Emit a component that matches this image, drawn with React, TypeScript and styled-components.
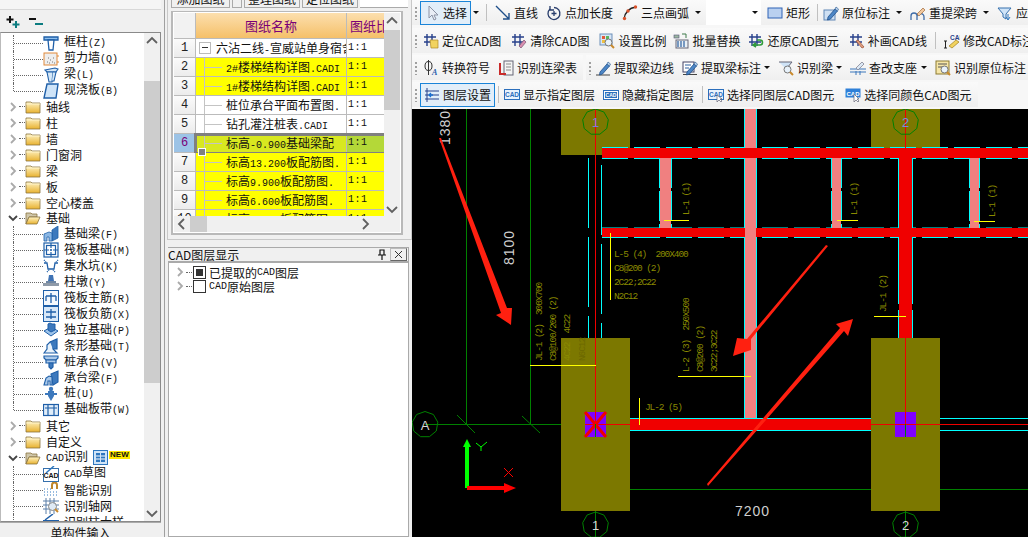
import React from "react";
import styled, { createGlobalStyle } from "styled-components";

const Global = createGlobalStyle`
  html, body { margin: 0; padding: 0; background: #f0f0f0; overflow: hidden; }
  * { box-sizing: border-box; }
  #root { width: 1028px; height: 537px; }
`;

const CJK = `"Noto Sans CJK SC", "Liberation Sans", sans-serif`;

const Page = styled.div`
  width: 1028px; height: 537px; display: flex; overflow: hidden;
  background: #f0f0f0; font-family: ${CJK}; font-size: 12px; color: #111;
`;
/* ---------- left ---------- */
const LeftPanel = styled.div`
  width: 165px; flex: none; display: flex; flex-direction: column;
  border-right: 1px solid #a0a0a0; padding-right: 3px;
`;
const LeftStub = styled.div`height: 10px; border-bottom: 1px solid #d8d8d8; background: #f5f5f5;`;
const ExpandBar = styled.div`height: 22px; display: flex; align-items: center; gap: 7px; padding: 2px 0 0 5px;`;
const Tree = styled.div`
  flex: 1; min-height: 0; display: flex; background: #fff; border: 1px solid #8a8a8a; border-left-color: #bbb;
`;
const TreeList = styled.div`flex: 1; min-width: 0; overflow: hidden; padding-top: 2px;`;
const TreeRow = styled.div`height: 15.96px; display: flex; align-items: center; white-space: nowrap; line-height: 16px;`;
const Chevron = styled.svg<{ $flush?: boolean }>`width: 12px; height: 12px; flex: none; margin-left: ${p => (p.$flush ? 0 : 6)}px;`;
const Dots = styled.span`width: 6px; border-bottom: 1px dotted #666; flex: none; margin-right: 0;`;
const GuideSlot = styled.span<{ $last?: boolean }>`
  width: 30px; margin-left: 12px; flex: none; align-self: flex-start;
  height: ${p => (p.$last ? "8px" : "16px")};
  border-left: 1px dotted #666; position: relative;
  &::after { content: ""; display: block; height: 8px; border-bottom: 1px dotted #666; }
`;
const TreeLabel = styled.span`margin-left: 5px; font-size: 12px; color: #111;`;
const Latin = styled.span`font-family: "Liberation Mono", monospace; font-size: 10px;`;
const BottomTab = styled.div`
  height: 15px; overflow: hidden; text-align: center; background: #f0f0f0; border-top: 1px solid #aaa;
  font-size: 12px; line-height: 16px; padding-top: 2px; color: #111;
`;
const Track = styled.div`width: 16px; flex: none; display: flex; flex-direction: column; background: #f0f0f0;`;
const HTrack = styled.div`height: 16px; flex: none; display: flex; background: #f0f0f0;`;
const ArrowCap = styled.div`
  flex: none; display: flex; align-items: center; justify-content: center;
  width: 16px; height: 16px;
`;
const Spacer = styled.div<{ $size: number }>`flex: none; flex-basis: ${p => p.$size}px;`;
const Thumb = styled.div<{ $size: number }>`flex: none; flex-basis: ${p => p.$size}px; background: #cdcdcd;`;

/* ---------- middle ---------- */
const MidPanel = styled.div`width: 247px; flex: none; display: flex; flex-direction: column; padding-left: 2px;`;
const MidTop = styled.div`
  height: 240px; border: 1px solid #c8c8c8; border-top: none; padding-right: 3px; padding-left: 3px;
  display: flex; flex-direction: column;
`;
const MidButtons = styled.div`height: 8px; display: flex; overflow: hidden; gap: 2px; flex: none;`;
const MidButton = styled.div<{ $w: number }>`
  width: ${p => p.$w}px; height: 8px; border: 1px solid #aaa; border-top: none; overflow: hidden;
  text-align: center; font-size: 12px; line-height: 10px; background: #f0f0f0; margin-top: 0;
  & > span { display: block; margin-top: -6px; }
`;
const MidBlank = styled.div`flex: 1; background: #fff; border-bottom: 1px solid #aaa;`;
const SheetBox = styled.div`
  margin-top: 3px; height: 224px; border: 2px solid #b9b9b9; border-top-width: 1px; background: #fff;
  padding: 1px; display: flex; flex-direction: column; width: 232px;
`;
const SheetBody = styled.div`flex: 1; min-height: 0; display: flex;`;
const SheetRows = styled.div`flex: 1; min-width: 0; overflow: hidden;`;
const SheetRowEl = styled.div<{ $sel?: boolean }>`
  display: grid; grid-template-columns: 22px 151px 38px; height: 19px; position: relative;
  ${p => p.$sel && `
    &::after { content: ""; position: absolute; left: 20px; right: -2px; top: -1px; bottom: -2px; border: 3px solid #808080; border-right: none; }
    &::before { content: ""; position: absolute; left: 24px; top: 14px; width: 6px; height: 6px; background: #808080; border: 1px solid #fff; z-index: 2; }
  `}
`;
const HeadRow = styled.div`
  display: grid; grid-template-columns: 22px 151px 38px; height: 26px; overflow: hidden;
`;
const HeadCorner = styled.div`background: #f2f2f2; border-right: 1px solid #bbb; border-bottom: 1px solid #bbb;`;
const HeadCell = styled.div`
  background: linear-gradient(#fcdfae, #f5c069); color: #7a0078; font-size: 13px; line-height: 25px;
  text-align: center; white-space: nowrap; overflow: hidden; border-right: 1px solid #bbb;
  border-bottom: 1px solid #bbb;
`;
const HeadCellClip = styled(HeadCell)`text-align: left; padding-left: 3px; border-right: none;`;
const RowNo = styled.div<{ $sel?: boolean }>`
  background: ${p => (p.$sel ? "#9cc3e6" : "linear-gradient(#fbfbfb,#ececec)")};
  color: ${p => (p.$sel ? "#7a0078" : "#222")}; text-align: center; font-family: "Liberation Mono", monospace;
  font-size: 12px; line-height: 18px; border-right: 1px solid #bbb; border-bottom: 1px solid #bbb;
`;
const NameCell = styled.div<{ $bg: string; $top?: boolean }>`
  background: ${p => p.$bg}; position: relative; white-space: nowrap; overflow: hidden; line-height: 18px;
  padding-left: ${p => (p.$top ? "20px" : "30px")}; border-right: 1px solid #bbb; border-bottom: 1px solid #bbb;
  font-size: 12px;
  ${p => !p.$top && `
    &::before { content: ""; position: absolute; left: 8px; top: 0; bottom: -1px; width: 1px; background: #c4c4c4; }
    &::after { content: ""; position: absolute; left: 9px; top: 9px; width: 17px; height: 1px; background: #c4c4c4; }
  `}
`;
const ExpandBox = styled.span`
  position: absolute; left: 3px; top: 3px; width: 12px; height: 12px; border: 1px solid #bbb; background: #fff;
  &::after { content: ""; position: absolute; left: 2px; right: 2px; top: 4px; height: 1px; background: #333; }
`;
const RatioCell = styled.div<{ $bg: string }>`
  background: ${p => p.$bg}; font-family: "Liberation Mono", monospace; font-size: 10px; letter-spacing: .5px; line-height: 18px;
  padding-left: 1px; border-bottom: 1px solid #bbb; white-space: nowrap;
`;
const LayerPanel = styled.div`margin-top: 7px; flex: 1; min-height: 0; display: flex; flex-direction: column; padding-left: 1px;`;
const LayerTitle = styled.div`
  height: 15px; display: flex; align-items: center; border: 1px solid #aaa; border-left: none;
  font-size: 12px; white-space: nowrap; background: #f0f0f0; width: 241px;
`;
const LayerName = styled.span`flex: 1; overflow: hidden;`;
const LayerBody = styled.div`flex: 1; background: #fff; border: 1px solid #aaa; padding: 2px 0 0 5px; width: 241px;`;
const LayerRow = styled.div`height: 14px; display: flex; align-items: center; font-size: 12px; white-space: nowrap;`;
const LayerCheck = styled.span<{ $on?: boolean }>`
  width: 13px; height: 13px; border: 1px solid #333; margin: 0 3px 0 1px; flex: none; background: #fff; position: relative;
  ${p => p.$on && `&::after { content: ""; position: absolute; left: 2px; top: 2px; width: 7px; height: 7px; background: #333; }`}
`;
const CloseBox = styled.span`
  width: 17px; height: 13px; border: 1px solid #bbb; border-right-color: #666; border-bottom-color: #666; display: flex; align-items: center; justify-content: center; margin: 0 1px 0 3px;
`;

/* ---------- right ---------- */
const RightPanel = styled.div`flex: 1; min-width: 0; display: flex; flex-direction: column;`;
const Toolbars = styled.div`height: 109px; flex: none; background: #f7f7f7; overflow: hidden;`;
const ToolRow = styled.div<{ $h: number }>`display: flex; gap: 3px; height: ${p => p.$h}px; white-space: nowrap;`;
const Bar = styled.div<{ $w: number }>`
  height: 25px; display: flex; align-items: center; gap: 8px; padding-left: 3px; flex: none;
  background: linear-gradient(#fafafa, #efefef); width: ${p => p.$w}px;
`;
const Grip = styled.span`width: 2px; height: 14px; flex: none; background-image: radial-gradient(circle, #a0a0a0 1px, transparent 1px); background-size: 2px 4px; margin-right: -4px;`;
const Tool = styled.span<{ $ml?: number; $sel?: boolean }>`
  display: inline-flex; align-items: center; gap: 3px; font-size: 12px; color: #111; flex: none;
  margin-left: ${p => p.$ml ?? 0}px;
  ${p => p.$sel && `border: 1px solid #1a84d8; background: #e2eef9; height: 24px; padding: 0 3px;`}
`;
const Sep = styled.span<{ $ml?: number }>`width: 1px; height: 17px; background: #c0c0c0; flex: none; margin-left: ${p => p.$ml ?? 0}px;`;
const Drop = styled.span<{ $ml?: number }>`
  width: 0; height: 0; border-left: 3px solid transparent; border-right: 3px solid transparent; border-top: 3px solid #111; flex: none;
  margin-left: ${p => p.$ml ?? -2}px;
`;
const WhiteGap = styled.span`
  width: 55px; height: 25px; background: #fff; display: flex; align-items: center; justify-content: flex-end; padding-right: 3px; flex: none; margin-left: -3px;
`;
const Canvas = styled.div`flex: 1; min-height: 0; background: #000; overflow: hidden;`;
const Drawing = styled.svg`display: block; width: 616px; height: 428px;`;

/* ---------- icons ---------- */
const Svg = styled.svg`width: 16px; height: 16px; flex: none; display: block;`;
const B = "#1f5fa8", LB = "#8fc0ee";
const hash = (c = "#27408b") => (
  <g stroke={c} strokeWidth="1.4" fill="none">
    <path d="M4 1v12M9 1v12M1 4h12M1 9h12" />
  </g>
);
const pen = (
  <g>
    <path d="M5 12 12 4l2.5 2-7 8-3 1z" fill="#4c86c6" stroke="#1f4f8a" strokeWidth=".8" />
    <path d="M12 4l1-2 2.5 2-1 2z" fill="#bcd6f0" stroke="#1f4f8a" strokeWidth=".6" />
  </g>
);
const glass = (
  <g>
    <circle cx="9.5" cy="9.5" r="3.5" fill="#e8f2fb" stroke="#777" />
    <path d="M12 12l3 3" stroke="#c98a2c" strokeWidth="2" />
  </g>
);
const cadBox = (fill: string, c: string) => (
  <g>
    <rect x=".5" y="2.5" width="15" height="10" fill={fill} stroke={c} />
    <text x="8" y="10" textAnchor="middle" fontSize="6.5" fontFamily="Liberation Sans" fontWeight="700" fill={c}>CAD</text>
  </g>
);
const ICONS: Record<string, React.ReactNode> = {
  select: <path d="M5 1v12l3-3 2 5 2-1-2-4h4z" fill="#e9eef6" stroke="#8b93a5" />,
  line: <g stroke="#1f4f8a" fill="none" strokeWidth="1.4"><path d="M1 1l13 13M14 8v6H8" /></g>,
  pointlen: <g fill="none" stroke="#273c6b" strokeWidth="1.3"><path d="M4 4a6 6 0 1 0 4-1.5" /><path d="M4 1v4h4" /><path d="M8 6v5M5.500 8.500h5" /></g>,
  arc: <g><path d="M2 14C3 7 7 3 14 2" fill="none" stroke="#222" strokeWidth="1.3" /><circle cx="2.500" cy="13.500" r="1.700" fill="#d9522c" /><circle cx="6" cy="6" r="1.700" fill="#d9522c" /><circle cx="13.500" cy="2" r="1.700" fill="#d9522c" /></g>,
  rect: <rect x="1" y="3" width="14" height="10" fill="#b9d0f0" stroke="#2f62b5" />,
  mark: <g><rect x="1" y="5" width="11" height="10" fill="#cfe0f3" stroke="#5f86b5" />{pen}</g>,
  respan: <g><path d="M1 15v-4a3 3 0 0 1 6 0v4M7 15v-3a3 3 0 0 1 7 0v3" fill="none" stroke="#3e6ca8" strokeWidth="1.300" /><path d="M7 9l6-6 2 2-6 6z" fill="#f0c8a0" stroke="#a06a3a" strokeWidth=".7" /></g>,
  apply: <g><path d="M1 3h13l-5 6v5l-3-2V9z" fill="#cfe4f8" stroke="#3670ad" /><path d="M11 9v5M9 12l2 3 2-3" stroke="#2e77bf" fill="none" /></g>,
  locate: <g>{hash()}<path d="M7 7h8v8H8z" fill="#f2d35f" stroke="#b08a25" strokeWidth=".7" /></g>,
  clear: <g>{hash()}<path d="M8 13l5-6 2 2-5 6z" fill="#d98fb0" stroke="#7a5070" strokeWidth=".7" /></g>,
  scale: <g><rect x="1" y="1" width="12" height="11" fill="#d7e6f6" stroke="#6d8fb8" /><rect x="3" y="3" width="3" height="3" fill="#e25a3a" /><rect x="7" y="3" width="3" height="3" fill="#5cb85c" /><rect x="3" y="7" width="3" height="3" fill="#f0c040" />{glass}</g>,
  batch: <g><rect x="1" y="2" width="5" height="3" fill="#9ab7a0" stroke="#557" strokeWidth=".6" /><rect x="3" y="7" width="12" height="8" fill="#e9f0f6" stroke="#667" /><path d="M5 8v6M8 8v6M11 8v6" stroke="#2c5f9e" strokeWidth="1.200" /><path d="M9 1h4v4" fill="none" stroke="#3f7a4a" /></g>,
  restore: <g>{hash()}<path d="M6 12h6a2 2 0 0 0 0-5H9M8 10l-3 2 3 2" fill="none" stroke="#2e9a3a" strokeWidth="1.600" /></g>,
  patch: <g>{hash()}<path d="M7 8l2-1 6 7-2 1z" fill="#e0a080" stroke="#9a4a30" strokeWidth=".7" /></g>,
  modify: <g><text x="6" y="7" fontSize="6.500" fontWeight="700" fontFamily="Liberation Sans" fill="#27408b">CAD</text><path d="M0 8h3M1.500 8v7M0 15h3" stroke="#222" /><path d="M5 13l7-6 3 2-7 6z" fill="#f2d35f" stroke="#a08020" strokeWidth=".7" /></g>,
  phi: <g fill="none" stroke="#333" strokeWidth="1"><ellipse cx="5.500" cy="6" rx="3.500" ry="4.500" /><path d="M5.500 0v15" /><text x="9" y="15" fontSize="8" fontStyle="italic" fontWeight="700" stroke="none" fontFamily="Liberation Serif" fill="#2a5caa">A</text></g>,
  linktable: <g><rect x="6" y="1" width="9" height="14" fill="#f4f4f4" stroke="#667" /><path d="M8 4h5M8 7h5M8 10h5" stroke="#8a8a8a" /><path d="M2 3v11h6M2 14" fill="none" stroke="#c92a2a" strokeWidth="2" /></g>,
  extract: <g><path d="M1 15h14" stroke="#444" />{pen}</g>,
  extractmark: <g><rect x="1" y="2" width="11" height="10" fill="#fff" stroke="#446" /><path d="M3 5h6M3 8h4" stroke="#2c5f9e" /><path d="M1 14.500h14" stroke="#444" />{pen}</g>,
  idbeam: <g><path d="M1 2h13l-5 6v2" fill="#cfe4f8" stroke="#667" />{glass}</g>,
  support: <g><path d="M0 9h16M0 12h16" stroke="#3b77bb" /><path d="M6 15v-4M10 15v-4" stroke="#3b77bb" /><path d="M6 8l6-6 2 2-6 6z" fill="#dce8f4" stroke="#778" strokeWidth=".7" /></g>,
  idorigin: <g><rect x="1" y="1" width="13" height="13" fill="#f6e6a8" stroke="#8c7a30" /><path d="M3 4h9M3 7h5" stroke="#555" />{glass}</g>,
  layers: <g stroke="#27408b" fill="none"><path d="M3 1v14M1 4h14M1 8h14M1 12h14" /><path d="M9 8l-4 0M7 6 5 8l2 2" stroke="#1a6fd0" strokeWidth="1.300" /></g>,
  show: cadBox("#eaf3fd", "#2c6fbc"),
  hide: <g><rect x=".5" y="3.500" width="15" height="9" fill="#fdfdfd" stroke="#2c6fbc" /><rect x="2" y="5" width="12" height="6" fill="#2c6fbc" /><text x="8" y="10" textAnchor="middle" fontSize="5" fontWeight="700" fontFamily="Liberation Sans" fill="#fff">CAD</text></g>,
  samelayer: <g>{cadBox("#eaf3fd", "#2c6fbc")}<path d="M9 8v7l2-2 2 2 1-1-2-2h2z" fill="#fff" stroke="#667" strokeWidth=".7" /></g>,
  samecolor: <g><rect x=".5" y="1.500" width="15" height="9" fill="#2f80d8" /><text x="8" y="8.500" textAnchor="middle" fontSize="6" fontWeight="700" fontFamily="Liberation Sans" fill="#fff">CAD</text><path d="M9 7v8l2-2 2 2 1-1-2-2h2z" fill="#fff" stroke="#667" strokeWidth=".7" /></g>,
  // tree icons
  column: <g fill={LB} stroke={B} strokeWidth="1.300"><path d="M1 2h14v3H1z" /><path d="M5 5h6l-1 10H6z" fill="#fff" /></g>,
  wall: <g><rect x="1" y="2" width="13" height="12" fill="#eee" stroke="#e08a3c" /><path d="M4 11h1M7 9h1M6 12h1M9 11h1M10 7h1M5 7h1M11 12h1" stroke="#777" /><path d="M14 5h2M14 11h2" stroke="#e08a3c" /></g>,
  beam: <g fill="#d5e8f8" stroke={B} strokeWidth="1.100"><path d="M2 3l10-2 3 1-2 3H4z" /><path d="M4 5h6l-1 10H6z" /><path d="M10 5l3 0-2 9H9" /></g>,
  slab: <path d="M4 1h11l-2 14H1z" fill="#cfe4f8" stroke={B} strokeWidth="1.400" />,
  fbeam: <g fill="#3d79bd" stroke={B} strokeWidth=".8"><path d="M9 4l6-4v12l-6 3z" /><path d="M1 15V8l5-2 3 1v8h-3v-4H4v4z" fill="#8bb7e4" /></g>,
  raft: <g fill="none" stroke={B} strokeWidth="1.200"><rect x="1" y="1" width="14" height="14" /><rect x="3.500" y="3.500" width="9" height="9" /><path d="M8 1v14M1 8h14" strokeDasharray="2 1" /></g>,
  pit: <g fill="none" stroke={B} strokeWidth="1.300"><path d="M1 5h3l1 6h6l1-6h3" /><path d="M1 2l2 2M15 2l-2 2M4 14l2-2M12 14l-2-2" strokeDasharray="1 1" /></g>,
  pier: <g><path d="M5 7l1-6h4l1 6z" fill="#3f73b5" /><rect x="0" y="9" width="16" height="3" fill="#8f9aa8" /><rect x="3" y="7" width="10" height="2" fill="#6f87a3" /></g>,
  rmain: <g fill="none" stroke={B}><rect x=".5" y=".5" width="15" height="15" fill="#f4f9fe" /><path d="M8 3v10M3 6h10M3 6v5M13 6v5" strokeWidth="1.300" /></g>,
  rneg: <g fill="none" stroke={B}><rect x=".5" y=".5" width="15" height="15" fill="#d8e8f8" /><path d="M8 3v10M3 6h10M3 11h10" strokeWidth="1.300" /></g>,
  iso: <g fill="#9cc3ea" stroke={B} strokeWidth="1"><path d="M1 9l7-4 7 4-7 5z" /><path d="M5 8V2l2-1 2 1 3 0v6l-4 2z" fill="#3d79bd" /></g>,
  strip: <g fill="#e8f2fb" stroke={B} strokeWidth="1.200"><path d="M1 15l3-4V7l3-3h3l0 7 4 4z" /><path d="M7 4l7-3v10l-4 0" fill="#3d79bd" /></g>,
  cap: <g fill="#aac9ea" stroke={B} strokeWidth="1.200"><path d="M1 2h14v2l-2 2H3L1 4z" /><path d="M3 6h10v3H3z" /><path d="M6 9h4v4l-2 2-2-2z" fill="#3d79bd" /></g>,
  capb: <g fill="#aac9ea" stroke={B} strokeWidth="1.100"><path d="M8 4l7-3v11l-5 3z" fill="#3d79bd" /><path d="M1 15l2-7 3-2 3 1v8h-2v-4H5v4z" /></g>,
  pile: <g fill="#3d79bd"><circle cx="8" cy="3" r="2.200" /><rect x="2" y="7" width="12" height="2" /><path d="M5 5h6v5l-3 5-3-5z" /></g>,
  strap: <g fill="none" stroke={B} strokeWidth="1.200"><rect x=".5" y="2.500" width="15" height="11" fill="#e0edf9" /><path d="M5 3v10M11 3v10M2 6h12" /></g>,
  cadfile: <g><rect x=".5" y="2.500" width="15" height="13" fill="#fff" stroke="#3670ad" /><text x="8" y="12" textAnchor="middle" fontSize="7" fontWeight="700" fontFamily="Liberation Sans" fill="#111">CAD</text><path d="M3 7l8-7" stroke="#2e77bf" strokeWidth="1.500" /></g>,
  smart: <g fill="none"><path d="M1 7h1M4 7h1M7 7h1M1 10h1M4 10h1M7 10h1M10 10h1M13 10h1M1 13h1M4 13h1M7 13h1M10 13h1M13 13h1" stroke="#2e77bf" /><path d="M9 7V3a2 2 0 0 1 5 0v4" stroke="#c0862a" strokeWidth="2" /></g>,
  axis: <g><path d="M3 0v16M7 0v16M11 0v16M0 3h16M0 7h16M0 11h16" stroke="#5b7ea8" /><circle cx="9.500" cy="8.500" r="4" fill="#dfeaf5" stroke="#888" /><path d="M12 11l3 3" stroke="#c98a2c" strokeWidth="2" /></g>,
  colsample: <g><rect x=".5" y="6.500" width="15" height="9" fill="#e8f2fb" stroke={B} /><path d="M2 6l8-6" stroke={B} strokeWidth="1.500" /></g>,
  fresh: <g><rect x=".5" y=".5" width="14" height="14" fill="#cfe4f8" stroke="#2e77bf" /><rect x="3" y="3" width="4" height="9" fill="#2e77bf" /><rect x="8" y="3" width="4" height="9" fill="#2e77bf" /><path d="M3 6h4M3 9h4M8 6h4M8 9h4" stroke="#fff" /></g>,
};
const Icon = ({ n }: { n: string }) => <Svg viewBox="0 0 16 16">{ICONS[n]}</Svg>;

const Folder = ({ open }: { open?: boolean }) => (
  <Svg viewBox="0 0 16 16">
    <defs>
      <linearGradient id="fg" x1="0" y1="0" x2="0" y2="1">
        <stop offset="0" stopColor="#fff3c4" />
        <stop offset="1" stopColor="#e8b230" />
      </linearGradient>
    </defs>
    {open ? (
      <g stroke="#8a7440" strokeWidth=".8">
        <path d="M1 14V3h5l1 1h5v3H4z" fill="#cfc6aa" />
        <path d="M1 14l3-7h11l-3 7z" fill="url(#fg)" />
      </g>
    ) : (
      <g stroke="#8a7440" strokeWidth=".8">
        <path d="M1 3h5l1 1h8v10H1z" fill="url(#fg)" />
        <path d="M1 5h14" stroke="#fff6d0" />
      </g>
    )}
  </Svg>
);

const Mixed = ({ t }: { t: string }) => (
  <>
    {t.split(/([\x00-\x7f]+)/).map((s, i) =>
      /^[\x00-\x7f]+$/.test(s) ? <Latin key={i}>{s}</Latin> : s ? <React.Fragment key={i}>{s}</React.Fragment> : null
    )}
  </>
);

const ChevronIcon = ({ open, flush }: { open?: boolean; flush?: boolean }) => (
  <Chevron viewBox="0 0 12 12" $flush={flush}>
    <path d={open ? "M2 4l4 4 4-4" : "M4 2l4 4-4 4"} fill="none" stroke={open ? "#444" : "#aaa"} strokeWidth="1.800" />
  </Chevron>
);

const FolderRow = ({ t, open, extra }: { t: string; open?: boolean; extra?: React.ReactNode }) => (
  <TreeRow>
    <ChevronIcon open={open} />
    <Dots />
    <Folder open={open} />
    <TreeLabel><Mixed t={t} /></TreeLabel>
    {extra}
  </TreeRow>
);
const LeafRow = ({ t, i, last }: { t: string; i: string; last?: boolean }) => (
  <TreeRow>
    <GuideSlot $last={last} />
    <Icon n={i} />
    <TreeLabel><Mixed t={t} /></TreeLabel>
  </TreeRow>
);

const NewTag = styled.span`
  font-family: "Liberation Sans", sans-serif; font-size: 8px; font-weight: 700; color: #111; background: #ffe800;
  line-height: 8px; height: 8px; padding: 0 1px; align-self: flex-start; margin-top: 1px;
`;
const FreshWrap = styled.span`margin-left: 5px; display: inline-flex;`;

const UpCap = ({ d }: { d: "u" | "d" | "l" | "r" }) => {
  const p = { u: "M3 10l5-5 5 5", d: "M3 6l5 5 5-5", l: "M10 3 5 8l5 5", r: "M6 3l5 5-5 5" }[d];
  return (
    <ArrowCap>
      <svg width="16" height="16" viewBox="0 0 16 16"><path d={p} fill="none" stroke="#606060" strokeWidth="1.800" /></svg>
    </ArrowCap>
  );
};

const sheetRows = [
  { n: "2#楼梯结构详图.CADI", y: true },
  { n: "1#楼梯结构详图.CADI", y: true },
  { n: "桩位承台平面布置图." },
  { n: "钻孔灌注桩表.CADI" },
  { n: "标高-0.900基础梁配", s: true },
  { n: "标高13.200板配筋图.", y: true },
  { n: "标高9.900板配筋图.", y: true },
  { n: "标高6.600板配筋图.", y: true },
  { n: "标高3.300板配筋图.", y: true },
];

const ToolItem = ({ i, t, ml, sel, drop, dm }: { i: string; t: string; ml?: number; sel?: boolean; drop?: boolean; dm?: number }) => (
  <>
    <Tool $ml={ml} $sel={sel}><Icon n={i} />{t}</Tool>
    {drop && <Drop $ml={dm} />}
  </>
);

/* ---------- CAD drawing ---------- */
const CadText = styled.text<{ $c?: string }>`
  font-family: "Liberation Mono", monospace; font-size: 9.5px; letter-spacing: -1.1px; fill: ${p => p.$c ?? "#8a8a00"};
`;
const DimText = styled.text`
  font-family: "Liberation Sans", sans-serif; font-size: 14px; fill: #cfcfcf; letter-spacing: 1px;
`;
const BubbleText = styled.text<{ $c?: string }>`
  font-family: "Liberation Sans", sans-serif; font-size: 13px; fill: ${p => p.$c ?? "#d8d8d8"}; text-anchor: middle;
`;
const VText = ({ x, y, t, c }: { x: number; y: number; t: string; c?: string }) => (
  <CadText transform={`translate(${x} ${y}) rotate(-90)`} $c={c} xmlSpace="preserve">{t}</CadText>
);

const octagon = (cx: number, cy: number, r = 13) => {
  const pts: string[] = [];
  for (let k = 0; k < 9; k++) {
    const a = (k / 9) * Math.PI * 2 - Math.PI / 2;
    pts.push(`${(cx + r * Math.cos(a)).toFixed(1)},${(cy + r * Math.sin(a)).toFixed(1)}`);
  }
  return pts.join(" ");
};
const Bubble = ({ x, y, t, c }: { x: number; y: number; t: string; c?: string }) => (
  <g>
    <polygon points={octagon(x, y)} fill="none" stroke="#008000" />
    <BubbleText x={x} y={y + 5} $c={c}>{t}</BubbleText>
  </g>
);

const CY = "#00ffff", RD = "#f00000", PK = "#f08080", GR = "#008000", YL = "#ffff00", OL = "#7c7800", AR = "#ff2010";
const dash = "26 6";

const CadDrawing = () => (
  <Drawing viewBox="412 109 616 428">
    {/* grid lines */}
    <path d="M466.500 109V424M530.500 109V424M425 424.500H596M595.500 424V537M596 489.500H1028M905.500 424V537" stroke={GR} fill="none" />
    <path d="M457 415l18 18M522 416l18 17M586 499l19-19M896 499l19-19" stroke={GR} fill="none" />
    {/* pile caps */}
    <rect x="561" y="109" width="69" height="46" fill={OL} />
    <rect x="871" y="109" width="69" height="39" fill={OL} />
    <rect x="561" y="338" width="69" height="173" fill={OL} />
    <rect x="871" y="338" width="69" height="173" fill={OL} />
    {/* cyan side lines */}
    <g stroke={CY} fill="none">
      <path d="M588.500 158V338M601.500 165V338" strokeDasharray="70 9" />
      <path d="M602 147.500H1028M602 158.500H1028M602 228H1028M602 237.500H1028" strokeDasharray={dash} />
      <path d="M630 418.500H871M630 430.500H871M940 418.500H1028M940 430.500H1028" />
      <path d="M898.500 158V338M912.500 158V338" strokeDasharray="70 6" />
      <path d="M744.500 109V418M756.500 109V418" />
      <path d="M659.500 158V228M671.500 158V228M831.500 158V228M841.500 158V228M969.500 158V228M979.500 158V228" strokeDasharray="30 3" />
    </g>
    {/* beams */}
    <rect x="745" y="109" width="11" height="309" fill={PK} />
    <rect x="660" y="158" width="11" height="70" fill={PK} />
    <rect x="832" y="158" width="9" height="70" fill={PK} />
    <rect x="970" y="158" width="9" height="70" fill={PK} />
    <rect x="602" y="148" width="426" height="10" fill={RD} />
    <rect x="602" y="228" width="426" height="9" fill={RD} />
    <rect x="745" y="228" width="11" height="9" fill={PK} />
    <rect x="899" y="158" width="13" height="180" fill={RD} />
    <rect x="630" y="419" width="241" height="11" fill={RD} />
    {/* red axis */}
    <path d="M595.500 109V424M905.500 109V424M595 424.500H1028" stroke={RD} fill="none" />
    {/* columns */}
    <rect x="585" y="412" width="21" height="25" fill="#8000ff" />
    <rect x="895" y="412" width="21" height="25" fill="#8000ff" />
    <path d="M585 412l21 25M606 412l-21 25" stroke={RD} strokeWidth="3" />
    <path d="M595.500 412V424M585 424.500H606M905.500 412V424M895 424.500H916" stroke={RD} />
    <path d="M595.500 424V437M905.500 424V437" stroke={GR} />
    {/* leader lines */}
    <path d="M664 220.500H689M837 220.500H858M974 221.500H995M874 316.500H906M530 365.500H596M678 376.500H751M610.500 233V300M639.500 398V425" stroke={YL} fill="none" />
    {/* notes */}
    <CadText x="614" y="257" xmlSpace="preserve">L-5 (4)  200X400</CadText>
    <CadText x="614" y="271">C8@200 (2)</CadText>
    <CadText x="614" y="285">2C22;2C22</CadText>
    <CadText x="614" y="299">N2C12</CadText>
    <VText x={542} y={361} t="JL-1 (2)  300X700" />
    <VText x={556} y={361} t="C8@100/200 (2)" />
    <VText x={570} y={361} t="4C22  4C22" />
    <VText x={585} y={361} t="N6C12" c="#6c6800" />
    <VText x={689} y={372} t="L-2 (3)  250X500" />
    <VText x={703} y={372} t="C8@200 (2)" />
    <VText x={717} y={372} t="3C22;3C22" />
    <VText x={689} y={215} t="L-1 (1)" />
    <VText x={857} y={215} t="L-1 (1)" />
    <VText x={995} y={217} t="L-1 (1)" />
    <VText x={886} y={312} t="JL-1 (2)" />
    <CadText x="645" y="410" xmlSpace="preserve">JL-2 (5)</CadText>
    {/* dims */}
    <DimText transform="translate(450 145) rotate(-90)">13800</DimText>
    <DimText transform="translate(514 265) rotate(-90)">8100</DimText>
    <DimText x="735" y="516">7200</DimText>
    {/* bubbles */}
    <Bubble x={595.500} y={122} t="1" c="#7a7ae0" />
    <Bubble x={905.500} y={122} t="2" c="#7a8ae0" />
    <Bubble x={425} y={424.500} t="A" />
    <Bubble x={595.500} y={525} t="1" />
    <Bubble x={905.500} y={525} t="2" />
    {/* ucs */}
    <path d="M465 488V447H463l4-8 4 8H469V488z" fill="#00ff00" />
    <path d="M467 486H504V483L516 488 504 493V490H467z" fill="#ff0000" />
    <path d="M476 443l5 4 6-5M481 447v4" stroke="#00ff00" fill="none" />
    <path d="M504 468l9 9M513 468l-9 9" stroke="#ff0000" fill="none" />
    {/* annotation arrows */}
    <polygon points="439,138 441,138 507,308 512,308 511,325 496,315 501,313" fill={AR} />
    <polygon points="828,246 751,339 751,350 733,356 737,338 747,339 826,245" fill={AR} />
    <polygon points="707,484 708,486 844,331 848,336 853,319 836,324 840,328" fill={AR} />
  </Drawing>
);

export default function App() {
  return (
    <Page>
      <Global />
      <LeftPanel>
        <LeftStub />
        <ExpandBar>
          <svg width="16" height="14" viewBox="0 0 16 14"><path d="M5 1v7M1.500 4.500h7" stroke="#111" strokeWidth="2" /><path d="M11 6v7M7.500 9.500h7" stroke="#0c7c80" strokeWidth="2" /></svg>
          <svg width="16" height="14" viewBox="0 0 16 14"><path d="M1 4h7" stroke="#111" strokeWidth="2" /><path d="M7 9h8" stroke="#0c7c80" strokeWidth="2" /></svg>
        </ExpandBar>
        <Tree>
          <TreeList>
            <LeafRow t="框柱(Z)" i="column" />
            <LeafRow t="剪力墙(Q)" i="wall" />
            <LeafRow t="梁(L)" i="beam" />
            <LeafRow t="现浇板(B)" i="slab" last />
            <FolderRow t="轴线" />
            <FolderRow t="柱" />
            <FolderRow t="墙" />
            <FolderRow t="门窗洞" />
            <FolderRow t="梁" />
            <FolderRow t="板" />
            <FolderRow t="空心楼盖" />
            <FolderRow t="基础" open />
            <LeafRow t="基础梁(F)" i="fbeam" />
            <LeafRow t="筏板基础(M)" i="raft" />
            <LeafRow t="集水坑(K)" i="pit" />
            <LeafRow t="柱墩(Y)" i="pier" />
            <LeafRow t="筏板主筋(R)" i="rmain" />
            <LeafRow t="筏板负筋(X)" i="rneg" />
            <LeafRow t="独立基础(P)" i="iso" />
            <LeafRow t="条形基础(T)" i="strip" />
            <LeafRow t="桩承台(V)" i="cap" />
            <LeafRow t="承台梁(F)" i="capb" />
            <LeafRow t="桩(U)" i="pile" />
            <LeafRow t="基础板带(W)" i="strap" last />
            <FolderRow t="其它" />
            <FolderRow t="自定义" />
            <FolderRow t="CAD识别" open extra={<><FreshWrap><Icon n="fresh" /></FreshWrap><NewTag>NEW</NewTag></>} />
            <LeafRow t="CAD草图" i="cadfile" />
            <LeafRow t="智能识别" i="smart" />
            <LeafRow t="识别轴网" i="axis" />
            <LeafRow t="识别柱大样" i="colsample" />
          </TreeList>
          <Track>
            <UpCap d="u" />
            <Spacer $size={32} />
            <Thumb $size={302} />
            <Spacer $size={122} />
            <UpCap d="d" />
          </Track>
        </Tree>
        <BottomTab>单构件输入</BottomTab>
      </LeftPanel>

      <MidPanel>
        <MidTop>
          <MidButtons>
            <MidButton $w={59}><span>添加图纸</span></MidButton>
            <MidButton $w={10} />
            <MidButton $w={56}><span>整理图纸</span></MidButton>
            <MidButton $w={56}><span>定位图纸</span></MidButton>
            <MidBlank />
          </MidButtons>
          <SheetBox>
            <SheetBody>
              <SheetRows>
                <HeadRow>
                  <HeadCorner />
                  <HeadCell>图纸名称</HeadCell>
                  <HeadCellClip>图纸比例</HeadCellClip>
                </HeadRow>
                <SheetRowEl>
                  <RowNo>1</RowNo>
                  <NameCell $bg="#fff" $top><ExpandBox /><Mixed t="六沾二线-宣威站单身宿舍楼" /></NameCell>
                  <RatioCell $bg="#fff">1:1</RatioCell>
                </SheetRowEl>
                {sheetRows.map((r, i) => (
                  <SheetRowEl key={i} $sel={r.s}>
                    <RowNo $sel={r.s}>{i + 2}</RowNo>
                    <NameCell $bg={r.s ? "#d8e820" : r.y ? "#ffff00" : "#fff"}><Mixed t={r.n} /></NameCell>
                    <RatioCell $bg={r.s ? "#b4d838" : r.y ? "#ffff00" : "#fff"}>1:1</RatioCell>
                  </SheetRowEl>
                ))}
              </SheetRows>
              <Track>
                <UpCap d="u" />
                <Spacer $size={1} />
                <Thumb $size={80} />
                <Spacer $size={91} />
                <UpCap d="d" />
              </Track>
            </SheetBody>
            <HTrack>
              <UpCap d="l" />
              <Thumb $size={17} />
              <Spacer $size={150} />
              <UpCap d="r" />
            </HTrack>
          </SheetBox>
        </MidTop>
        <LayerPanel>
          <LayerTitle>
            <LayerName>CAD图层显示</LayerName>
            <svg width="10" height="11" viewBox="0 0 10 11"><path d="M3 1h4v5H3zM1 6h8M5 6v5" fill="none" stroke="#111" strokeWidth="1.200" /></svg>
            <CloseBox>
              <svg width="9" height="9" viewBox="0 0 9 9"><path d="M1 1l7 7M8 1 1 8" stroke="#333" /></svg>
            </CloseBox>
          </LayerTitle>
          <LayerBody>
            <LayerRow>
              <ChevronIcon flush />
              <Dots />
              <LayerCheck $on />
              <Mixed t="已提取的CAD图层" />
            </LayerRow>
            <LayerRow>
              <ChevronIcon flush />
              <Dots />
              <LayerCheck />
              <Mixed t="CAD原始图层" />
            </LayerRow>
          </LayerBody>
        </LayerPanel>
      </MidPanel>

      <RightPanel>
        <Toolbars>
          <ToolRow $h={28}>
            <Bar $w={616}>
              <Grip />
              <ToolItem i="select" t="选择" sel drop ml={-1} dm={-6} />
              <Sep $ml={-1} />
              <ToolItem i="line" t="直线" />
              <ToolItem i="pointlen" t="点加长度" />
              <ToolItem i="arc" t="三点画弧" ml={1} drop />
              <WhiteGap><Drop $ml={0} /></WhiteGap>
              <ToolItem i="rect" t="矩形" ml={-2} />
              <Sep $ml={-1} />
              <ToolItem i="mark" t="原位标注" ml={-3} drop />
              <ToolItem i="respan" t="重提梁跨" drop />
              <ToolItem i="apply" t="应用到同名梁" />
            </Bar>
          </ToolRow>
          <ToolRow $h={27}>
            <Bar $w={616}>
              <Grip />
              <ToolItem i="locate" t="定位CAD图" ml={2} />
              <ToolItem i="clear" t="清除CAD图" ml={2} />
              <ToolItem i="scale" t="设置比例" ml={2} />
              <ToolItem i="batch" t="批量替换" ml={-1} />
              <ToolItem i="restore" t="还原CAD图元" />
              <ToolItem i="patch" t="补画CAD线" ml={2} />
              <Sep />
              <ToolItem i="modify" t="修改CAD标注" />
            </Bar>
          </ToolRow>
          <ToolRow $h={27}>
            <Bar $w={171}>
              <Grip />
              <ToolItem i="phi" t="转换符号" ml={2} />
              <ToolItem i="linktable" t="识别连梁表" />
            </Bar>
            <Bar $w={442}>
              <Grip />
              <ToolItem i="extract" t="提取梁边线" />
              <ToolItem i="extractmark" t="提取梁标注" drop dm={-5} />
              <ToolItem i="idbeam" t="识别梁" drop dm={-5} />
              <ToolItem i="support" t="查改支座" drop dm={-4} />
              <ToolItem i="idorigin" t="识别原位标注" drop dm={-5} />
            </Bar>
          </ToolRow>
          <ToolRow $h={25}>
            <Bar $w={566}>
              <Grip />
              <ToolItem i="layers" t="图层设置" sel ml={-1} />
              <Sep $ml={-5} />
              <ToolItem i="show" t="显示指定图层" ml={-3} />
              <ToolItem i="hide" t="隐藏指定图层" />
              <Sep />
              <ToolItem i="samelayer" t="选择同图层CAD图元" ml={-3} />
              <ToolItem i="samecolor" t="选择同颜色CAD图元" ml={3} />
            </Bar>
          </ToolRow>
        </Toolbars>
        <Canvas><CadDrawing /></Canvas>
      </RightPanel>
    </Page>
  );
}
